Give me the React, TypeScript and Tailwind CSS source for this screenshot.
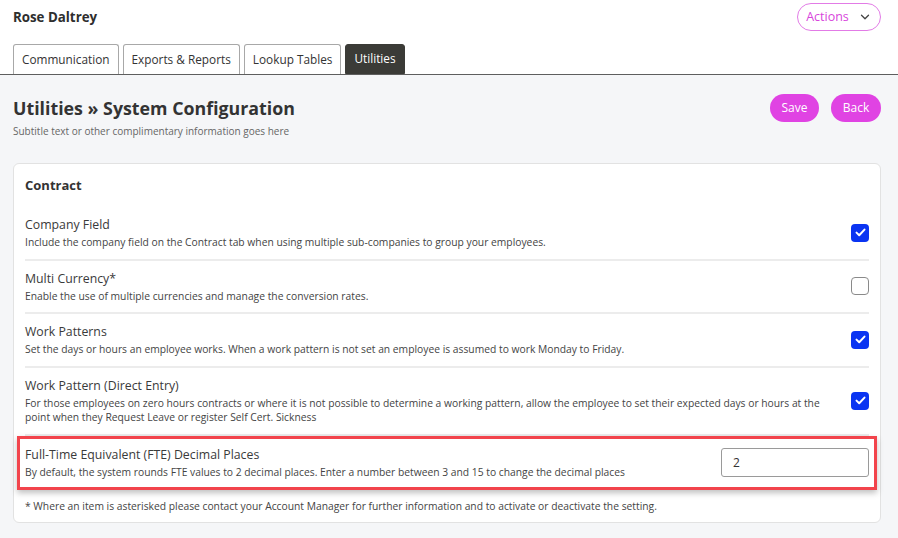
import { ChevronDown } from 'lucide-react';

type Setting = {
  title: string;
  description: string;
  checked: boolean;
};

const settings: Setting[] = [
  {
    title: 'Company Field',
    description: 'Include the company field on the Contract tab when using multiple sub-companies to group your employees.',
    checked: true,
  },
  {
    title: 'Multi Currency*',
    description: 'Enable the use of multiple currencies and manage the conversion rates.',
    checked: false,
  },
  {
    title: 'Work Patterns',
    description: 'Set the days or hours an employee works. When a work pattern is not set an employee is assumed to work Monday to Friday.',
    checked: true,
  },
  {
    title: 'Work Pattern (Direct Entry)',
    description:
      'For those employees on zero hours contracts or where it is not possible to determine a working pattern, allow the employee to set their expected days or hours at the point when they Request Leave or register Self Cert. Sickness',
    checked: true,
  },
];

function Checkbox({ checked }: { checked: boolean }) {
  if (!checked) {
    return <div className="w-[18px] h-[18px] rounded-[4px] border border-[#8a8a8a] bg-white shrink-0" />;
  }
  return (
    <div className="w-[18px] h-[18px] rounded-[4px] bg-[#0a34f2] flex items-center justify-center shrink-0">
      <svg width="11" height="9" viewBox="0 0 11 9" fill="none">
        <path d="M1.5 4.6 L4.2 7.2 L9.5 1.6" stroke="white" strokeWidth="2" strokeLinecap="round" strokeLinejoin="round" />
      </svg>
    </div>
  );
}

const tabs = ['Communication', 'Exports & Reports', 'Lookup Tables', 'Utilities'];

export default function App() {
  return (
    <div className="min-h-screen bg-[#f5f6f8] text-[#333] font-['Open_Sans',sans-serif]">
      {/* Header */}
      <div className="bg-white border-b border-[#5e5e5e] pl-[13px] pr-[17px]">
        <div className="flex items-center justify-between pt-[3px]">
          <h1 className="text-[13.3px] font-bold text-[#2e2e2e] leading-[28px]">Rose Daltrey</h1>
          <button className="h-[28px] w-[84px] rounded-full border border-[#e27be6] flex items-center justify-center gap-[9px] text-[12.5px] text-[#d845dc]">
            Actions
            <ChevronDown className="w-[14px] h-[14px] text-[#444]" strokeWidth={2.2} />
          </button>
        </div>
        <div className="flex gap-[4px] mt-[13px]">
          {tabs.map((tab) => (
            <div
              key={tab}
              className={
                tab === 'Utilities'
                  ? 'h-[30px] px-[8px] flex items-center rounded-t-[3px] bg-[#3b3b37] text-white text-[11.8px] border border-[#3b3b37]'
                  : 'h-[30px] px-[8px] flex items-center rounded-t-[3px] bg-white text-[#333] text-[11.8px] border border-b-0 border-[#a8a8a8]'
              }
            >
              {tab}
            </div>
          ))}
        </div>
      </div>

      {/* Page title */}
      <div className="pl-[13px] pr-[17px] pt-[19px] flex justify-between items-start">
        <div>
          <h2 className="text-[17.8px] font-bold text-[#333] leading-[28px]">Utilities » System Configuration</h2>
          <p className="text-[10px] text-[#666] mt-[2px]">Subtitle text or other complimentary information goes here</p>
        </div>
        <div className="flex gap-[12px]">
          <button className="h-[28px] w-[49px] rounded-full bg-[#e043e3] text-white text-[12px]">Save</button>
          <button className="h-[28px] w-[50px] rounded-full bg-[#e043e3] text-white text-[12px]">Back</button>
        </div>
      </div>

      {/* Card */}
      <div className="ml-[13px] mr-[17px] mt-[24px] bg-white border border-[#e2e2e2] rounded-[6px] p-[11px] pb-[8px]">
        <h3 className="text-[13px] font-bold text-[#333] leading-[18px] pt-[1px]">Contract</h3>
        <div className="mt-[13px]">
          {settings.map((s) => (
            <div key={s.title} className="flex items-center justify-between gap-[24px] py-[9px] border-b-2 border-[#ececec]">
              <div>
                <div className="text-[12.3px] leading-[17px] text-[#3a3a3a]">{s.title}</div>
                <div className="text-[10.3px] leading-[14.5px] text-[#444] mt-[2px]">{s.description}</div>
              </div>
              <Checkbox checked={s.checked} />
            </div>
          ))}
          <div className="-mx-[8px] px-[5px] border-[3px] border-[#f2444c] shadow-[0_3px_6px_rgba(0,0,0,0.25)] flex items-center justify-between py-[7px]">
            <div>
              <div className="text-[12.3px] leading-[17px] text-[#3a3a3a]">Full-Time Equivalent (FTE) Decimal Places</div>
              <div className="text-[10.3px] leading-[15px] text-[#444] mt-[2px]">
                By default, the system rounds FTE values to 2 decimal places. Enter a number between 3 and 15 to change the decimal places
              </div>
            </div>
            <div className="w-[148px] h-[29px] border border-[#9a9a9a] rounded-[3px] flex items-center px-[11px] text-[12px] text-[#333]">2</div>
          </div>
        </div>
        <p className="text-[10.3px] text-[#444] mt-[9px] leading-[15px]">
          * Where an item is asterisked please contact your Account Manager for further information and to activate or deactivate the setting.
        </p>
      </div>
    </div>
  );
}
